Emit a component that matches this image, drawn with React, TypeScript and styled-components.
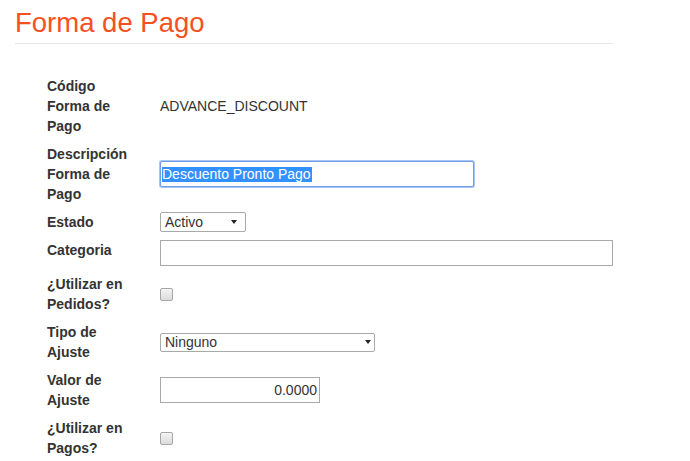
import React from "react";
import styled, { createGlobalStyle } from "styled-components";

const GlobalStyle = createGlobalStyle`
  html, body {
    margin: 0;
    padding: 0;
    background: #ffffff;
  }
  body {
    font-family: "Liberation Sans", Arial, Helvetica, sans-serif;
    color: #333333;
  }
  * { box-sizing: border-box; }
`;

const Page = styled.div`
  padding: 8px 0 0 15px;
`;

const Header = styled.div`
  width: 598px;
  padding-bottom: 5px;
  border-bottom: 1px solid #e5e5e5;
`;

const Title = styled.h1`
  margin: 0;
  font-size: 27.5px;
  line-height: 30px;
  font-weight: 400;
  color: #f4511e;
`;

const Form = styled.div`
  margin: 28px 0 0 32px;
  width: 566px;
  display: flex;
  flex-direction: column;
`;

const Row = styled.div`
  display: flex;
  padding: 4px 0;
`;

const Label = styled.div`
  flex: none;
  width: 113px;
  align-self: flex-start;
  font-size: 14px;
  line-height: 20px;
  font-weight: 700;
  color: #333333;
`;

const Value = styled.div`
  flex: 1;
  align-self: center;
  display: flex;
  align-items: center;
  min-width: 0;
`;

const StaticText = styled.span`
  font-size: 14px;
  line-height: 20px;
  color: #333333;
`;

const FocusedField = styled.div<{ $width: number }>`
  width: ${(p) => p.$width}px;
  height: 26px;
  border: 1px solid #6f9de6;
  box-shadow: 0 0 0 1px #a9c5f1;
  border-radius: 2px;
  display: flex;
  align-items: center;
  padding: 0 0 0 1px;
  background: #ffffff;
`;

const SelectedText = styled.span`
  display: inline-block;
  font-size: 14px;
  line-height: 14px;
  padding: 0 1px 1px 0;
  background: #3391ff;
  color: #ffffff;
`;

const TextInput = styled.input<{ $width: number; $align?: string }>`
  width: ${(p) => p.$width}px;
  height: 26px;
  margin: 0;
  border: 1px solid #a9a9a9;
  border-radius: 0;
  padding: 1px 2px;
  font-family: "Liberation Sans", Arial, sans-serif;
  font-size: 14px;
  color: #333333;
  text-align: ${(p) => p.$align || "left"};
  background: #ffffff;
  outline: none;
`;

const SelectBox = styled.div<{ $width: number; $height: number; $pr: number }>`
  width: ${(p) => p.$width}px;
  height: ${(p) => p.$height}px;
  border: 1px solid #a9a9a9;
  border-radius: 2px;
  padding: 0 ${(p) => p.$pr}px 0 4px;
  display: flex;
  align-items: center;
  justify-content: space-between;
  font-size: 14px;
  color: #333333;
  background: #ffffff;
`;

const Checkbox = styled.input`
  appearance: none;
  -webkit-appearance: none;
  margin: 0;
  width: 13px;
  height: 13px;
  border: 1px solid #a6a6a6;
  border-radius: 2px;
  background: linear-gradient(#f4f4f4, #dcdcdc);
`;

const Arrow = () => (
  <svg width="6" height="4" viewBox="0 0 6 4">
    <polygon points="0,0 6,0 3,4" fill="#222" />
  </svg>
);

const Select = ({ value, width, height, pr }: { value: string; width: number; height: number; pr: number }) => (
  <SelectBox $width={width} $height={height} $pr={pr}>
    <span>{value}</span>
    <Arrow />
  </SelectBox>
);

export default function App() {
  return (
    <>
      <GlobalStyle />
      <Page>
        <Header>
          <Title>Forma de Pago</Title>
        </Header>
        <Form>
          <Row>
            <Label>
              Código
              <br />
              Forma de
              <br />
              Pago
            </Label>
            <Value>
              <StaticText>ADVANCE_DISCOUNT</StaticText>
            </Value>
          </Row>
          <Row>
            <Label>
              Descripción
              <br />
              Forma de
              <br />
              Pago
            </Label>
            <Value>
              <FocusedField $width={314}>
                <SelectedText>Descuento Pronto Pago</SelectedText>
              </FocusedField>
            </Value>
          </Row>
          <Row>
            <Label>Estado</Label>
            <Value>
              <Select value="Activo" width={86} height={20} pr={8} />
            </Value>
          </Row>
          <Row>
            <Label>Categoria</Label>
            <Value>
              <TextInput $width={453} readOnly defaultValue="" />
            </Value>
          </Row>
          <Row>
            <Label>
              ¿Utilizar en
              <br />
              Pedidos?
            </Label>
            <Value>
              <Checkbox type="checkbox" />
            </Value>
          </Row>
          <Row>
            <Label>
              Tipo de
              <br />
              Ajuste
            </Label>
            <Value>
              <Select value="Ninguno" width={215} height={19} pr={3} />
            </Value>
          </Row>
          <Row>
            <Label>
              Valor de
              <br />
              Ajuste
            </Label>
            <Value>
              <TextInput $width={160} $align="right" readOnly defaultValue="0.0000" />
            </Value>
          </Row>
          <Row>
            <Label>
              ¿Utilizar en
              <br />
              Pagos?
            </Label>
            <Value>
              <Checkbox type="checkbox" />
            </Value>
          </Row>
        </Form>
      </Page>
    </>
  );
}
